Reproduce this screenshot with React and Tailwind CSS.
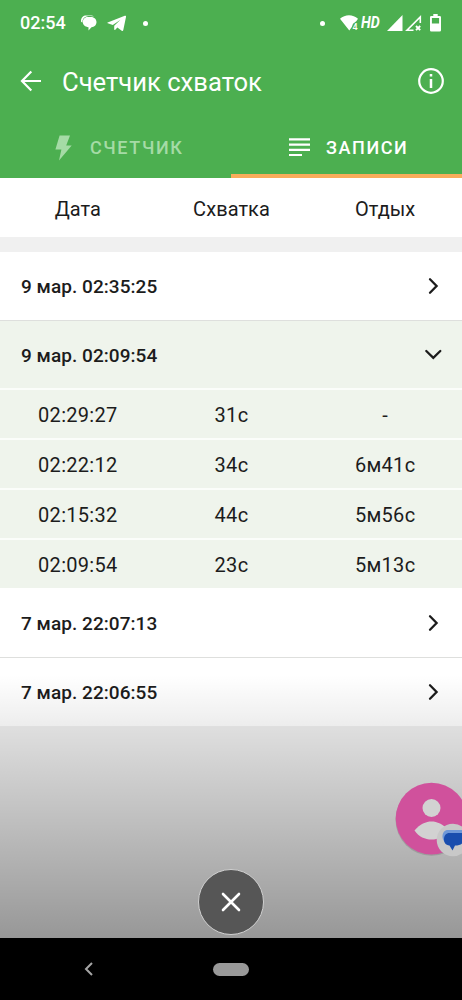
import { useState } from "react";

const COLUMNS = ["Дата", "Схватка", "Отдых"];

const SESSIONS = [
  { id: 1, title: "9 мар. 02:35:25", records: [] },
  {
    id: 2,
    title: "9 мар. 02:09:54",
    records: [
      ["02:29:27", "31с", "-"],
      ["02:22:12", "34с", "6м41с"],
      ["02:15:32", "44с", "5м56с"],
      ["02:09:54", "23с", "5м13с"],
    ],
  },
  { id: 3, title: "7 мар. 22:07:13", records: [] },
  { id: 4, title: "7 мар. 22:06:55", records: [] },
];

function StatusBar() {
  return (
    <div className="flex h-[46px] items-center pl-5 pr-[21px]">
      <span className="w-[61px] text-[18px] font-medium leading-none">02:54</span>
      <svg width="16" height="16" viewBox="0 0 16 16" fill="currentColor">
        <path d="M0 6C0 2.500 2.400 .5 5 .5H9C11 .5 12.500 1 13.500 1.600C11 .9 8 .9 5.500 1.500C3 2.100 1.300 4 1.400 7.500C.6 7.400 0 7 0 6Z" />
        <path d="M6.500 1.900H10C13.300 1.900 15.500 4.200 15.500 7.100S13.300 12.200 10.500 12.300L7.500 15.500V12.200C4 12 1.800 9.900 1.800 7.100S3.800 1.900 6.500 1.900Z" />
      </svg>
      <svg className="ml-[10px]" width="20" height="17" viewBox="0 0 20 17" fill="currentColor">
        <path d="M.7 7.500L17.800.8C18.600.5 19.200.9 19 1.900L16.300 14.900C16.100 15.900 15.500 16.200 14.700 15.700L10.400 12.600L8.300 14.700C7.700 15.300 7.200 15 7.200 14.200V10.700L13.500 4.700L5.800 9.900L.8 8.300C0 8.100 0 7.700.7 7.500Z" />
      </svg>
      <span className="ml-[16px] size-[5px] rounded-full bg-white" />
      <span className="ml-auto mr-[15px] size-[5px] rounded-full bg-white" />
      <svg width="19" height="18" viewBox="0 0 19 18">
        <path d="M0 4.800C5 .1 13 .1 18 4.800L16.300 7.300L13 9.800L11.800 13L9.300 16.500Z" fill="currentColor" />
        <text x="12.500" y="15.500" fill="currentColor" fontFamily="Roboto, sans-serif" fontSize="9" fontWeight="500">4</text>
      </svg>
      <span className="ml-[2px] w-[26px] origin-left scale-x-[0.86] text-[16.5px] font-bold italic leading-none">HD</span>
      <svg width="16" height="16" viewBox="0 0 16 16" fill="currentColor">
        <path d="M15.500 0V16H0Z" />
      </svg>
      <svg className="ml-[2px]" width="18" height="16" viewBox="0 0 18 16" fill="none" stroke="currentColor">
        <path d="M15.300 8V2L2 15.200H8.500" strokeWidth="1.600" />
        <path d="M11 11L15.200 15.200M15.200 11L11 15.200" strokeWidth="1.900" />
      </svg>
      <svg className="ml-[7px]" width="11" height="18" viewBox="0 0 11 18" fill="currentColor">
        <path fillRule="evenodd" d="M3.300 0H7.700V2H9.700Q11 2 11 3.300V16.200Q11 17.500 9.700 17.500H1.300Q0 17.500 0 16.200V3.300Q0 2 1.300 2H3.300ZM1.900 4V9.500H9.100V4Z" />
      </svg>
    </div>
  );
}

function AppBar() {
  return (
    <div className="flex h-[70px] items-center pl-[20px] pr-[18px]">
      <svg width="22" height="22" viewBox="0 0 22 22" fill="none" stroke="currentColor" strokeWidth="2.200">
        <path d="M21 11H2M11.300 1.600L2 11L11.300 20.400" />
      </svg>
      <h1 className="ml-[20px] pt-[3px] text-[25.6px] leading-none">Счетчик схваток</h1>
      <svg className="ml-auto" width="26" height="26" viewBox="0 0 26 26" fill="none" stroke="currentColor" strokeWidth="2.200">
        <circle cx="13" cy="13" r="11.800" />
        <path d="M13 11V20M13 6V8.500" strokeWidth="2.500" />
      </svg>
    </div>
  );
}

function Tabs() {
  return (
    <div className="grid h-[62px] grid-cols-2 text-[18px] font-medium leading-none tracking-[1.6px]">
      <button className="flex items-center pl-[55px] pt-[2px] text-[#a5dba6]">
        <svg width="17" height="26" viewBox="0 0 17 26" fill="currentColor">
          <path d="M4.600.6H15L11.200 10.500H16.700L4 25.500L6.400 14.500H.4Z" />
        </svg>
        <span className="ml-[18px]">СЧЕТЧИК</span>
      </button>
      <button className="flex items-center border-b-[4px] border-[#f9ac5b] pl-[58px] pt-[5px]">
        <svg width="21" height="19" viewBox="0 0 21 19" fill="currentColor">
          <path d="M0 .3H21V2.500H0ZM0 5.500H21V7.700H0ZM0 10.700H21V12.900H0ZM0 15.900H13V18.100H0Z" />
        </svg>
        <span className="ml-[16px]">ЗАПИСИ</span>
      </button>
    </div>
  );
}

function Chevron({ open }) {
  return (
    <svg width="18" height="18" viewBox="0 0 18 18" fill="none" stroke="currentColor" strokeWidth="2.300" strokeLinecap="round">
      <path d={open ? "M2.300 5L9.300 11.800L16.300 5" : "M6 2.300L12.600 9L6 15.700"} />
    </svg>
  );
}

function Session({ session, open, onToggle }) {
  return (
    <section className={open ? "bg-[#eff4ec]" : "bg-white"}>
      <button
        onClick={onToggle}
        className={[
          "flex w-full items-center justify-between pl-[21px] pr-[20px] text-[19px] font-medium leading-none tracking-[0.05px]",
          open ? "h-[67px]" : "h-[68px]",
        ].join(" ")}
      >
        <span className={open ? "pt-[2px]" : ""}>{session.title}</span>
        <Chevron open={open} />
      </button>
      {open &&
        session.records.map((record) => (
          <div
            key={record[0]}
            className="grid h-[50px] grid-cols-3 items-center border-t-2 border-[#fbfdfa] pl-px pt-[2px] text-center text-[20px] leading-none tracking-[0.3px]"
          >
            {record.map((value) => (
              <span key={value}>{value}</span>
            ))}
          </div>
        ))}
    </section>
  );
}

function ChatHead() {
  return (
    <svg className="absolute right-0 top-[780px]" width="68" height="80" viewBox="0 0 68 80">
      <circle cx="37.500" cy="39.800" r="36" fill="#777" opacity=".4" />
      <circle cx="37.500" cy="38.600" r="35.800" fill="#d0519c" />
      <circle cx="37.500" cy="28" r="9" fill="#d2d2d2" />
      <path d="M20.500 50.500C26 44 32 41.500 37.500 41.500S49 44 54.500 50.500C50 57 44 59.500 37.500 59.500S25 57 20.500 50.500Z" fill="#d2d2d2" />
      <circle cx="59" cy="60" r="16.300" fill="#c8c8c8" />
      <path d="M54 50H68V63H54C50.500 62.500 48.500 60 48.500 56.500C48.500 52.500 50.500 50 54 50Z" fill="#6f98d8" />
      <path d="M55.500 53H68V63.500C66.500 65 64 65.500 61 65.500L58.500 70.500L55.500 65.500C51.500 65 50 62.500 50 59.500C50 55.500 52 53 55.500 53Z" fill="#194dae" />
    </svg>
  );
}

export default function App() {
  const [openId, setOpenId] = useState(2);

  return (
    <div className="relative flex h-[1000px] w-[462px] flex-col overflow-hidden bg-[#f0f0f0] font-['Roboto',sans-serif] text-[#1c1c1c]">
      <header className="bg-[#4caf50] text-white">
        <StatusBar />
        <AppBar />
        <Tabs />
      </header>

      <div className="mb-[15px] grid h-[59px] shrink-0 grid-cols-3 items-center bg-white pl-px pt-[2px] text-center text-[20px] leading-none tracking-[0.05px]">
        {COLUMNS.map((name) => (
          <span key={name}>{name}</span>
        ))}
      </div>

      <main className="flex-1">
        {SESSIONS.map((session, i) => (
          <div
            key={session.id}
            className={[
              i === SESSIONS.length - 1 ? "" : "border-b",
              session.id === openId ? "border-white" : "border-[#dedfdd]",
            ].join(" ")}
          >
            <Session
              session={session}
              open={session.id === openId}
              onToggle={() => setOpenId(session.id === openId ? null : session.id)}
            />
          </div>
        ))}
      </main>

      <div className="pointer-events-none absolute inset-x-0 bottom-[62px] h-[263px] bg-linear-to-b from-black/0 to-black/37" />
      <ChatHead />
      <button className="absolute left-[198px] top-[869px] flex size-[66px] items-center justify-center rounded-full border-[1.5px] border-[#d0d0d0] bg-[#565656] text-white">
        <svg width="20" height="20" viewBox="0 0 20 20" fill="none" stroke="currentColor" strokeWidth="2.600" strokeLinecap="round">
          <path d="M2 2L18 18M18 2L2 18" />
        </svg>
      </button>

      <nav className="relative grid h-[62px] shrink-0 grid-cols-[178px_106px_178px] items-center justify-items-center bg-black">
        <svg width="10" height="14" viewBox="0 0 10 14" fill="none" stroke="#a5a5a5" strokeWidth="2">
          <path d="M8 1L2 7L8 13" />
        </svg>
        <span className="h-[13px] w-[36px] rounded-full bg-[#999]" />
      </nav>
    </div>
  );
}
